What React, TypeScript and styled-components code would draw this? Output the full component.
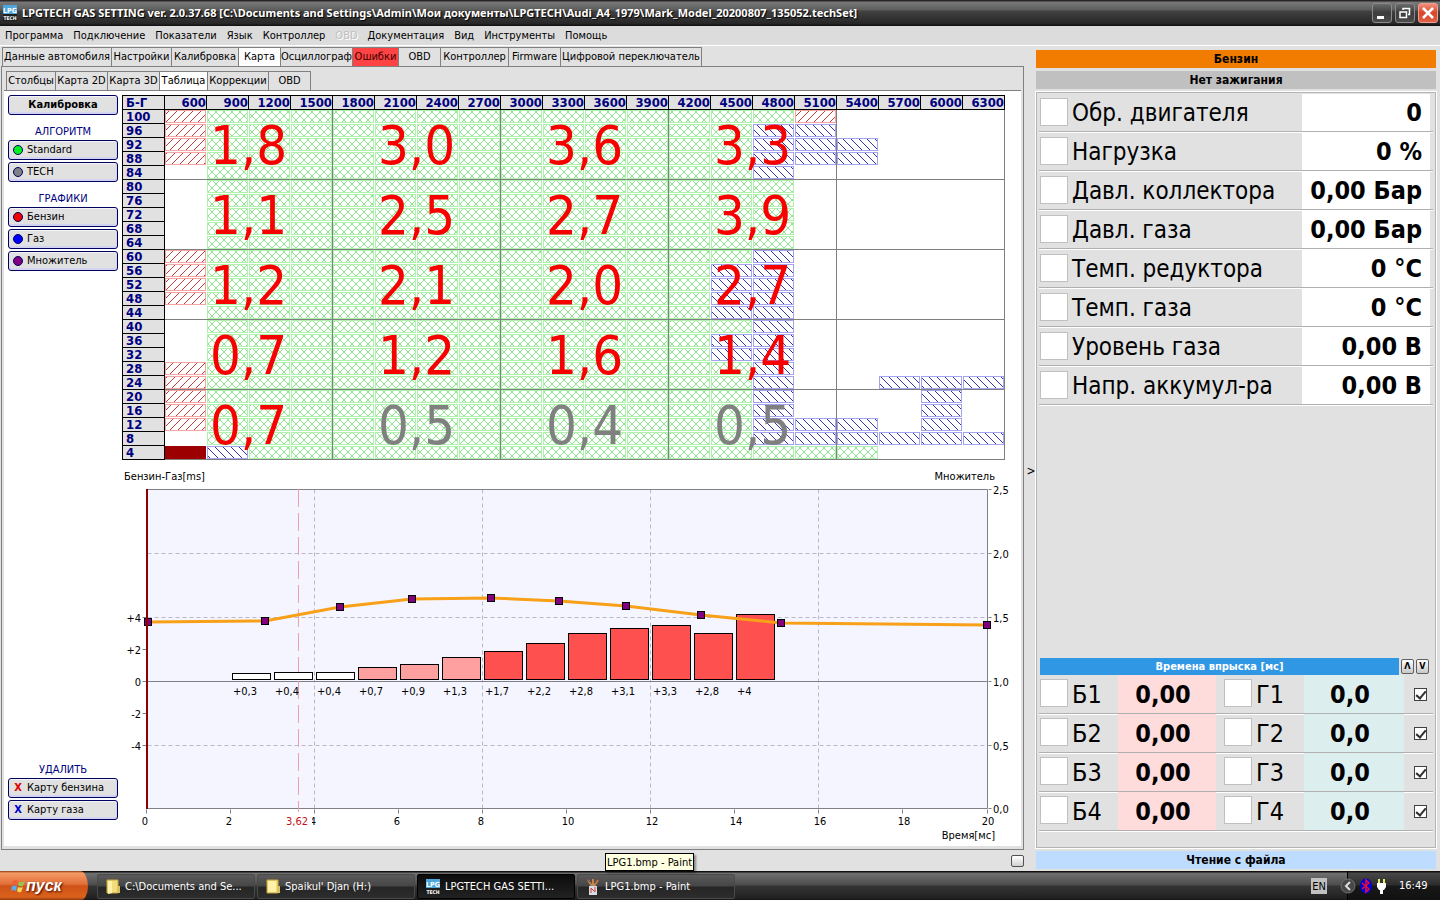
import React from "react";
import styled, { createGlobalStyle } from "styled-components";

const sans = `"DejaVu Sans Condensed", "DejaVu Sans", "Noto Sans", sans-serif`;

const GlobalStyle = createGlobalStyle`
  * { box-sizing: border-box; }
  html, body { margin: 0; padding: 0; }
  body { font-family: ${sans}; font-size: 11px; line-height: 14px; color: #000; background: #e1e1e1; }
  button, input { font: inherit; color: inherit; margin: 0; padding: 0; }
`;

const Page = styled.div`
  min-height: 100vh;
  display: flex;
  flex-direction: column;
  background: #e1e1e1;
`;

const TitleBar = styled.header`
  height: 26px;
  display: flex;
  align-items: center;
  gap: 5px;
  padding: 0 2px 0 3px;
  background: linear-gradient(#2a2526 0, #2a2526 1px, #787878 2px, #5c5c5c 10px, #424242 11px, #262626 24px, #141414 25px);
`;

const Title = styled.h1`
  flex: 1;
  margin: 0;
  font-family: "Noto Sans", sans-serif;
  font-size: 11px;
  line-height: 16px;
  font-weight: bold;
  color: #fff;
  text-shadow: 1px 1px 1px #000;
  white-space: nowrap;
`;

const WindowButtons = styled.div`
  display: flex;
  gap: 3px;
`;

const WindowButton = styled.button<{ $close?: boolean }>`
  width: 20px;
  height: 20px;
  display: flex;
  border: 1px solid ${(p) => (p.$close ? "#f0a090" : "#8a8a8a")};
  border-radius: 3px;
  background: ${(p) =>
    p.$close ? "linear-gradient(#f08f7c, #d8452a 50%, #e0604a)" : "linear-gradient(#6a6a6a, #3c3c3c 50%, #4c4c4c)"};
`;

const MenuBar = styled.nav`
  height: 20px;
  display: flex;
  align-items: center;
  gap: 10px;
  padding: 0 5px;
  background: #dcdcdc;
  border-bottom: 1px solid #fff;
`;

const MenuItem = styled.button`
  border: 0;
  background: none;
  white-space: nowrap;
  &:disabled { color: #c0c0c0; text-shadow: 1px 1px 0 #fff; }
`;

const Body = styled.main`
  flex: 1;
  display: flex;
`;

const LeftPane = styled.div`
  flex: 1;
  min-width: 0;
  display: flex;
  flex-direction: column;
  padding: 1px 0 0 1px;
`;

const TabRow = styled.div<{ $inset: number }>`
  display: flex;
  padding-left: ${(p) => p.$inset}px;
  height: 19px;
`;

const Tab = styled.button<{ $w: number; $active?: boolean; $alert?: boolean }>`
  width: ${(p) => p.$w}px;
  height: 19px;
  border: 1px solid #808080;
  border-width: 1px 1px 0 0;
  background: ${(p) => (p.$active ? "#fff" : p.$alert ? "#fd4343" : "#e1e1e1")};
  color: ${(p) => (p.$alert ? "#400" : "#000")};
  white-space: nowrap;
  overflow: visible;
  display: flex;
  justify-content: center;
  align-items: center;
  &:first-child { border-left-width: 1px; }
`;

const OuterPanel = styled.section`
  flex: 1;
  display: flex;
  flex-direction: column;
  border: 1px solid #808080;
  padding: 4px 2px 3px;
`;

const InnerPanel = styled.section`
  flex: 1;
  display: flex;
  gap: 4px;
  padding: 4px 0 0 4px;
  background: #fff;
  border-top: 1px solid #808080;
`;

const SideBar = styled.aside`
  width: 110px;
  display: flex;
  flex-direction: column;
  gap: 2px;
  padding-bottom: 26px;
`;

const SideTitle = styled.h2<{ $push?: boolean }>`
  margin: ${(p) => (p.$push ? "auto 0 0" : "8px 0 0")};
  font-size: 11px;
  line-height: 14px;
  height: 13px;
  font-weight: normal;
  text-align: center;
  color: #000080;
`;

const SideButton = styled.button<{ $main?: boolean }>`
  height: 20px;
  display: flex;
  align-items: center;
  justify-content: ${(p) => (p.$main ? "center" : "flex-start")};
  font-weight: ${(p) => (p.$main ? "bold" : "normal")};
  gap: 4px;
  padding: 0 4px;
  border: 1px solid #000060;
  border-radius: 3px;
  background: #e1e1e1;
  box-shadow: inset 0 1px 0 #f4f4f8, inset 0 -2px 0 #d4d4f2, inset -1px 0 0 #d4d4f2;
`;

const Dot = styled.span<{ $c: string }>`
  width: 10px;
  height: 10px;
  border-radius: 50%;
  border: 1px solid #000060;
  background: ${(p) => p.$c};
`;

const Cross = styled.span<{ $c: string }>`
  width: 10px;
  text-align: center;
  font-weight: bold;
  color: ${(p) => p.$c};
`;

const WorkArea = styled.div`
  flex: 1;
  min-width: 0;
  display: flex;
  flex-direction: column;
`;

const MapWrap = styled.div`
  position: relative;
  margin-right: 16px;
`;

const MapTable = styled.table`
  width: 100%;
  table-layout: fixed;
  border-collapse: separate;
  border-spacing: 0;
  border-left: 1px solid #000;
  color: #000080;
  font-size: 13px;
  line-height: 13px;
  th, td { padding: 0; height: 14px; }
`;

const Corner = styled.th`
  width: 42px;
  padding-left: 3px !important;
  text-align: left;
  background: #e1e1e1;
  border: solid #000;
  border-width: 1px 1px 1px 0;
`;

const ColHead = styled.th`
  text-align: right;
  background: #e1e1e1;
  border: solid #000;
  border-width: 1px 1px 1px 0;
`;

const RowHead = styled.th`
  text-align: left;
  padding-left: 3px !important;
  background: #e1e1e1;
  border: solid #000;
  border-width: 0 1px 1px 0;
`;

const slash = (c: string) => `linear-gradient(to bottom right, transparent 46%, ${c} 47%, ${c} 53%, transparent 54%)`;
const back = (c: string) => `linear-gradient(to bottom left, transparent 46%, ${c} 47%, ${c} 53%, transparent 54%)`;

const cellStyles: Record<string, string> = {
  r: `border: 1px solid #f5a3a3; background: ${slash("#c83c3c")} 0 0 / 8px 8px fixed;`,
  b: `border: 1px solid #a3a3ee; background: ${back("#3434ac")} 0 0 / 8px 8px fixed;`,
  g: `border: 1px solid #aef2ae; background: ${slash("#8ee68e")} 0 0 / 8px 8px fixed, ${back("#8ee68e")} 0 0 / 8px 8px fixed;`,
  d: `background: #9c0000;`,
};

const Cell = styled.div<{ $kind: string }>`
  height: 13px;
  margin: 0 1px 1px 0;
  ${(p) => cellStyles[p.$kind] ?? ""}
`;

const Blocks = styled.div`
  position: absolute;
  top: 15px;
  right: 0;
  bottom: 0;
  left: 43px;
  display: grid;
  grid-template: repeat(5, 1fr) / repeat(5, 1fr);
`;

const Block = styled.div<{ $muted?: boolean }>`
  display: flex;
  align-items: center;
  justify-content: center;
  padding-top: 2px;
  font-size: 54px;
  line-height: 60px;
  color: ${(p) => (p.$muted ? "#808080" : "#f80000")};
  border: solid rgba(0, 0, 0, 0.5);
  border-width: 0 1px 1px 0;
`;

const Chart = styled.svg`
  display: block;
  width: 100%;
  height: auto;
  font-family: ${sans};
  font-size: 11px;
`;

const StatusStrip = styled.footer`
  height: 21px;
  display: flex;
  justify-content: flex-end;
  align-items: center;
`;

const StatusButton = styled.button`
  width: 13px;
  height: 12px;
  border: 1px solid #505050;
  border-radius: 2px;
  background: linear-gradient(#fff, #d0d0d0);
`;

const Splitter = styled.button`
  width: 12px;
  border: 0;
  background: #e1e1e1;
  padding: 24px 0 0 2px;
  font-size: 12px;
`;

const RightPane = styled.aside`
  width: 404px;
  padding: 4px 4px 2px 0;
  display: flex;
  flex-direction: column;
  gap: 3px;
`;

const Banner = styled.div<{ $c: string }>`
  height: 18px;
  line-height: 18px;
  text-align: center;
  font-size: 12px;
  font-weight: bold;
  background: ${(p) => p.$c};
`;

const Gauges = styled.section`
  flex: 1;
  display: flex;
  flex-direction: column;
  border: 1px solid #b4b4b4;
  outline: 1px solid #fff;
  padding: 0 2px 16px;
`;

const GaugeRow = styled.div`
  height: 39px;
  display: flex;
  align-items: stretch;
  border-bottom: 1px solid #b0b0b0;
  box-shadow: 0 1px 0 #fff;
  font-size: 24px;
  line-height: 38px;
  padding: 1px 3px 0 1px;
`;

const Swatch = styled.button`
  width: 28px;
  height: 28px;
  margin-top: 4px;
  background: #fff;
  border: 1px solid #c0c0c0;
`;

const GaugeLabel = styled.span`
  flex: 1;
  padding-left: 4px;
  white-space: nowrap;
`;

const GaugeValue = styled.output`
  width: 128px;
  padding-right: 8px;
  text-align: right;
  font-weight: bold;
  font-size: 25px;
  background: #fff;
  white-space: nowrap;
`;

const TimesHead = styled.div`
  margin-top: auto;
  display: flex;
  align-items: center;
  gap: 2px;
  padding: 0 4px 0 1px;
`;

const TimesTitle = styled.h2`
  flex: 1;
  margin: 0;
  height: 17px;
  font-size: 11px;
  line-height: 18px;
  text-align: center;
  color: #fff;
  background: #2f97e4;
`;

const StepButton = styled.button`
  width: 13px;
  height: 15px;
  border: 1px solid #606060;
  border-radius: 2px;
  font-size: 9px;
  line-height: 9px;
  font-weight: bold;
  background: linear-gradient(#fff, #c8c8c8);
`;

const TimesRow = styled.div`
  height: 39px;
  display: flex;
  border-bottom: 1px solid #b0b0b0;
  box-shadow: 0 1px 0 #fff;
  font-size: 25px;
  line-height: 40px;
  padding-left: 1px;
`;

const TimesLabel = styled.span<{ $w: number }>`
  width: ${(p) => p.$w}px;
  padding-left: 4px;
`;

const TimesValue = styled.output<{ $c: string; $w: number }>`
  width: ${(p) => p.$w}px;
  padding-right: 8px;
  text-align: center;
  font-weight: bold;
  background: ${(p) => p.$c};
`;

const Gap = styled.span`
  width: 8px;
`;

const Tick = styled.input`
  appearance: none;
  width: 13px;
  height: 13px;
  margin: 13px 0 0 10px;
  border: 1px solid #404040;
  background: #fff;
  position: relative;
  &:checked::after {
    content: "";
    position: absolute;
    left: 3px;
    top: 0;
    width: 4px;
    height: 8px;
    border: solid #303030;
    border-width: 0 2px 2px 0;
    transform: rotate(40deg);
  }
`;

const TaskBar = styled.footer`
  height: 30px;
  display: flex;
  align-items: stretch;
  color: #fff;
  background: linear-gradient(#101010 0, #101010 1px, #707070 2px, #4c4c4c 14px, #343434 15px, #202020 28px, #000 30px);
`;

const Start = styled.button`
  width: 88px;
  display: flex;
  align-items: center;
  padding: 0 0 0 10px;
  border: 0;
  border-radius: 0 8px 8px 0 / 0 15px 15px 0;
  font: italic bold 16px/28px "Liberation Sans", sans-serif;
  color: #fff;
  text-shadow: 1px 1px 2px #401000;
  background: linear-gradient(#8a3a10 0, #f59a66 2px, #e2703a 13px, #cf5216 15px, #d9621c 26px, #7a2c08 30px);
`;

const Tasks = styled.div`
  flex: 1;
  display: flex;
  gap: 2px;
  padding: 3px 0 2px 9px;
`;

const Task = styled.button<{ $active?: boolean }>`
  position: relative;
  width: 158px;
  height: 25px;
  display: flex;
  align-items: center;
  gap: 5px;
  padding: 0 8px;
  border: 1px solid ${(p) => (p.$active ? "#000" : "#4a4a4a")};
  border-radius: 2px;
  color: #fff;
  white-space: nowrap;
  background: ${(p) =>
    p.$active ? "linear-gradient(#0c0c0c, #222)" : "linear-gradient(#5a5a5a, #464646 11px, #262626 12px, #2c2c2c)"};
`;

const Tip = styled.span`
  position: absolute;
  left: 27px;
  top: -22px;
  height: 18px;
  padding: 0 1px;
  line-height: 17px;
  color: #000;
  background: #ffffe1;
  border: 1px solid #000;
  box-shadow: 2px 2px 2px rgba(0, 0, 0, 0.4);
`;

const Lang = styled.span`
  align-self: center;
  width: 16px;
  height: 16px;
  line-height: 17px;
  text-align: center;
  color: #000;
  background: #c0c0c0;
  margin-right: 20px;
`;

const Tray = styled.div`
  width: 93px;
  display: flex;
  align-items: center;
  border-left: 1px solid #000;
  background: linear-gradient(#101010 0, #101010 1px, #484848 2px, #2c2c2c 14px, #181818 15px, #101010);
`;

const TrayIcons = styled.svg`
  flex: none;
  overflow: visible;
`;

const Clock = styled.time`
  margin-left: 11px;
`;

const LpgIcon = () => (
  <svg width="14" height="16" viewBox="0 0 14 16" aria-hidden="true">
    <rect width="14" height="9" fill="#4fa6dc" />
    <rect y="9" width="14" height="7" fill="#202020" />
    <text x="7" y="8" textAnchor="middle" fontSize="7" fontWeight="bold" fill="#fff">LPG</text>
    <text x="7" y="15" textAnchor="middle" fontSize="5" fontWeight="bold" fill="#fff">TECH</text>
  </svg>
);

const FolderIcon = ({ open }: { open?: boolean }) => (
  <svg width="14" height="16" viewBox="0 0 14 16" aria-hidden="true">
    <path d="M1 1h11v13H1z" fill="#f2dc7c" stroke="#c8a840" />
    <path d={open ? "M2 2h4v12l-4 1z" : "M2 2h8v11H2z"} fill="#fff2a8" />
    <path d="M12 7h2v7h-3z" fill="#d8c060" />
  </svg>
);

const PaintIcon = () => (
  <svg width="14" height="17" viewBox="0 0 14 17" aria-hidden="true">
    <path d="M6 8 2 2M7 8V1M8 8l4-6" stroke="#c08850" strokeWidth="2" />
    <path d="M1 1l3 3M12 1 9 5" stroke="#b04030" strokeWidth="1" />
    <rect x="3" y="8" width="8" height="9" fill="#d8dce8" />
    <path d="M5 15v-5l4 4v-5" stroke="#d04030" fill="none" />
  </svg>
);

const FlagIcon = () => (
  <svg width="16" height="16" viewBox="0 0 16 16" aria-hidden="true">
    <path d="M3 3q3-2 5 0L7 7Q5 6 2 7z" fill="#f06030" />
    <path d="M9 4q3 1 6-1l-2 5q-3 1-5-1z" fill="#90c850" />
    <path d="M2 8q3-1 5 0l-1 5q-3-2-5 0z" fill="#60a8f0" />
    <path d="M8 9q2 1 5 0l-2 5q-2 1-4-1z" fill="#f8d850" />
  </svg>
);

const menu = ["Программа", "Подключение", "Показатели", "Язык", "Контроллер", "OBD", "Документация", "Вид", "Инструменты", "Помощь"];

const mainTabs: [string, number][] = [
  ["Данные автомобиля", 110], ["Настройки", 60], ["Калибровка", 67], ["Карта", 42], ["Осциллограф", 72],
  ["Ошибки", 46], ["OBD", 42], ["Контроллер", 68], ["Firmware", 52], ["Цифровой переключатель", 141],
];

const subTabs: [string, number][] = [
  ["Столбцы", 50], ["Карта 2D", 52], ["Карта 3D", 52], ["Таблица", 48], ["Коррекции", 61], ["OBD", 42],
];

const rpm = Array.from({ length: 20 }, (_, i) => 600 + i * 300);
const g = (n: number) => "g".repeat(n);

const rows = [
  `r${g(14)}r....`,
  `r${g(13)}bb....`,
  `r${g(13)}bbb...`,
  `r${g(13)}bbb...`,
  `.${g(13)}b.....`,
  ...Array(5).fill(`.${g(14)}.....`),
  `r${g(13)}b.....`,
  ...Array(3).fill(`r${g(12)}bb.....`),
  `.${g(12)}bb.....`,
  `.${g(13)}b.....`,
  `.${g(12)}bb.....`,
  `.${g(12)}bb.....`,
  `r${g(13)}b.....`,
  `r${g(13)}b..bbb`,
  `r${g(13)}b...b.`,
  `r${g(13)}b...b.`,
  `r${g(13)}bbb.b.`,
  `.${g(13)}bbbbbb`,
  `db${g(15)}...`,
];

const blocks = [
  "1,8", "3,0", "3,6", "3,3", "",
  "1,1", "2,5", "2,7", "3,9", "",
  "1,2", "2,1", "2,0", "2,7", "",
  "0,7", "1,2", "1,6", "1,4", "",
  "0,7", "0,5", "0,4", "0,5", "",
];

const bars: [number, string, string][] = [
  [673, "+0,3", "#fff"], [672, "+0,4", "#fff"], [672, "+0,4", "#fff"], [667, "+0,7", "#ffa0a0"],
  [664, "+0,9", "#ffa0a0"], [657, "+1,3", "#ffa0a0"], [651, "+1,7", "#ff5050"], [643, "+2,2", "#ff5050"],
  [633, "+2,8", "#ff5050"], [628, "+3,1", "#ff5050"], [625, "+3,3", "#ff5050"], [633, "+2,8", "#ff5050"],
  [614, "+4", "#ff5050"],
];

const curve = [[148, 622], [265, 621], [340, 607], [412, 599], [491, 598], [559, 601], [626, 606], [701, 615], [781, 623], [987, 625]];

const gauges = [
  ["Обр. двигателя", "0"], ["Нагрузка", "0 %"], ["Давл. коллектора", "0,00 Бар"], ["Давл. газа", "0,00 Бар"],
  ["Темп. редуктора", "0 °C"], ["Темп. газа", "0 °C"], ["Уровень газа", "0,00 В"], ["Напр. аккумул-ра", "0,00 В"],
];

const InjectionChart = () => (
  <Chart viewBox="122 460 899 386" role="img" aria-label="Бензин-Газ, множитель">
    <text x="124" y="480">Бензин-Газ[ms]</text>
    <text x="995" y="480" textAnchor="end">Множитель</text>
    <rect x="147" y="489" width="841" height="320" fill="#f5f5ff" />
    <g transform="translate(0.5 0.5)" fill="none" stroke="#b8b8c8" strokeDasharray="4 3">
      {[314, 482, 650, 818].map((x) => <path key={x} d={`M${x} 489V808`} />)}
      {[553, 617, 745].map((y) => <path key={y} d={`M147 ${y}H987`} />)}
    </g>
    <g transform="translate(0.5 0.5)" fill="none" stroke="#808088">
      <path d="M147 489H987V808H147M147 681H987" />
      {[146, 230, 314, 398, 482, 566, 650, 734, 818, 902, 987].map((x) => <path key={x} d={`M${x} 809v4`} />)}
      {[489, 553, 617, 681, 745, 808].map((y) => <path key={y} d={`M988 ${y}h3`} />)}
      {[617, 649, 681, 713, 745].map((y) => <path key={y} d={`M142 ${y}h4`} />)}
    </g>
    <path d="M298.5 489V812" stroke="#f0a0a8" strokeDasharray="18 6" />
    <g transform="translate(0.5 0.5)" stroke="#000">
      {bars.map(([y, , c], i) => <rect key={i} x={232 + i * 42} y={y} width="38" height={679 - y} fill={c} />)}
    </g>
    {bars.map(([, t], i) => <text key={i} x={233 + i * 42} y="695">{t}</text>)}
    <polyline points={curve.map((p) => p.join()).join(" ")} fill="none" stroke="#f8a018" strokeWidth="3" />
    {curve.slice(1).map(([x, y]) => (
      <rect key={x} x={x - 3.5} y={y - 3.5} width="7" height="7" fill="#800080" stroke="#000" />
    ))}
    <rect x="144.5" y="618.5" width="7" height="7" fill="#800080" stroke="#000" />
    <path d="M147 489V809" stroke="#900000" strokeWidth="2" />
    {["+4", "+2", "0", "-2", "-4"].map((t, i) => <text key={t} x="141" y={622 + i * 32} textAnchor="end">{t}</text>)}
    {["2,5", "2,0", "1,5", "1,0", "0,5", "0,0"].map((t, i) => <text key={t} x="993" y={494 + i * 64 - (i === 5 ? 1 : 0)}>{t}</text>)}
    {Array.from({ length: 11 }, (_, i) => (
      <text key={i} x={(i > 4 ? 148 : 145) + i * 84} y="825" textAnchor="middle">{i * 2}</text>
    ))}
    <rect x="286" y="814" width="26" height="14" fill="#fff" />
    <text x="286" y="825" fill="#c81020">3,62</text>
    <text x="995" y="839" textAnchor="end">Время[мс]</text>
  </Chart>
);

export default function App() {
  return (
    <Page>
      <GlobalStyle />
      <TitleBar>
        <LpgIcon />
        <Title>LPGTECH GAS SETTING ver. 2.0.37.68 [C:\Documents and Settings\Admin\Мои документы\LPGTECH\Audi_A4_1979\Mark_Model_20200807_135052.techSet]</Title>
        <WindowButtons>
          <WindowButton aria-label="Свернуть">
            <svg width="18" height="18"><path d="M4 12h7v3H4z" fill="#fff" /></svg>
          </WindowButton>
          <WindowButton aria-label="Развернуть">
            <svg width="18" height="18" fill="none" stroke="#fff">
              <path d="M7 6V4.500h6.500v6H12" strokeWidth="1.500" /><path d="M4 8h6.500v5.500H4z" strokeWidth="1.500" />
            </svg>
          </WindowButton>
          <WindowButton $close aria-label="Закрыть">
            <svg width="18" height="18"><path d="M4 4l10 10M14 4 4 14" stroke="#fff" strokeWidth="2.500" /></svg>
          </WindowButton>
        </WindowButtons>
      </TitleBar>
      <MenuBar>
        {menu.map((m) => <MenuItem key={m} disabled={m === "OBD"}>{m}</MenuItem>)}
      </MenuBar>
      <Body>
        <LeftPane>
          <TabRow $inset={1}>
            {mainTabs.map(([t, w]) => <Tab key={t} $w={w} $active={t === "Карта"} $alert={t === "Ошибки"}>{t}</Tab>)}
          </TabRow>
          <OuterPanel>
            <TabRow $inset={2}>
              {subTabs.map(([t, w]) => <Tab key={t} $w={w} $active={t === "Таблица"}>{t}</Tab>)}
            </TabRow>
            <InnerPanel>
              <SideBar>
                <SideButton $main>Калибровка</SideButton>
                <SideTitle>АЛГОРИТМ</SideTitle>
                <SideButton><Dot $c="#00f020" />Standard</SideButton>
                <SideButton><Dot $c="#808088" />TECH</SideButton>
                <SideTitle>ГРАФИКИ</SideTitle>
                <SideButton><Dot $c="#f00000" />Бензин</SideButton>
                <SideButton><Dot $c="#0000ff" />Газ</SideButton>
                <SideButton><Dot $c="#800080" />Множитель</SideButton>
                <SideTitle $push>УДАЛИТЬ</SideTitle>
                <SideButton><Cross $c="#e00000">X</Cross>Карту бензина</SideButton>
                <SideButton><Cross $c="#0000d0">X</Cross>Карту газа</SideButton>
              </SideBar>
              <WorkArea>
                <MapWrap>
                  <MapTable>
                    <thead>
                      <tr><Corner>Б-Г</Corner>{rpm.map((r) => <ColHead key={r}>{r}</ColHead>)}</tr>
                    </thead>
                    <tbody>
                      {rows.map((r, i) => (
                        <tr key={i}>
                          <RowHead>{100 - i * 4}</RowHead>
                          {r.split("").map((k: string, j: number) => <td key={j}><Cell $kind={k} /></td>)}
                        </tr>
                      ))}
                    </tbody>
                  </MapTable>
                  <Blocks>
                    {blocks.map((v, i) => <Block key={i} $muted={i > 20}>{v}</Block>)}
                  </Blocks>
                </MapWrap>
                <InjectionChart />
              </WorkArea>
            </InnerPanel>
          </OuterPanel>
          <StatusStrip><StatusButton aria-label="Панель" /></StatusStrip>
        </LeftPane>
        <Splitter>&gt;</Splitter>
        <RightPane>
          <Banner $c="#f27c00">Бензин</Banner>
          <Banner $c="#c0c0c0">Нет зажигания</Banner>
          <Gauges>
            {gauges.map(([l, v]) => (
              <GaugeRow key={l}>
                <Swatch aria-label={l} /><GaugeLabel>{l}</GaugeLabel><GaugeValue>{v}</GaugeValue>
              </GaugeRow>
            ))}
            <TimesHead>
              <TimesTitle>Времена впрыска [мс]</TimesTitle>
              <StepButton>Λ</StepButton><StepButton>V</StepButton>
            </TimesHead>
            {[1, 2, 3, 4].map((n) => (
              <TimesRow key={n}>
                <Swatch aria-label={`Б${n}`} /><TimesLabel $w={50}>Б{n}</TimesLabel>
                <TimesValue $c="#ffdcdc" $w={98}>0,00</TimesValue><Gap />
                <Swatch aria-label={`Г${n}`} /><TimesLabel $w={52}>Г{n}</TimesLabel>
                <TimesValue $c="#dceeee" $w={100}>0,0</TimesValue>
                <Tick type="checkbox" defaultChecked aria-label={`Цилиндр ${n}`} />
              </TimesRow>
            ))}
          </Gauges>
          <Banner $c="#bedcff">Чтение с файла</Banner>
        </RightPane>
      </Body>
      <TaskBar>
        <Start><FlagIcon />пуск</Start>
        <Tasks>
          <Task><FolderIcon open />C:\Documents and Se...</Task>
          <Task><FolderIcon />Spaikul' Djan (H:)</Task>
          <Task $active><LpgIcon />LPGTECH GAS SETTI...</Task>
          <Task><PaintIcon />LPG1.bmp - Paint<Tip role="tooltip">LPG1.bmp - Paint</Tip></Task>
        </Tasks>
        <Lang>EN</Lang>
        <Tray>
          <TrayIcons width="40" height="20" viewBox="0 0 40 20" aria-hidden="true">
            <circle cx="0" cy="10" r="7" fill="#484848" stroke="#707070" />
            <path d="M2 6l-4 4 4 4" fill="none" stroke="#ddd" strokeWidth="2" />
            <ellipse cx="18" cy="10" rx="6" ry="7.500" fill="#0000d8" />
            <path d="M14 7l7 6-3 3V4l3 3-7 6" fill="none" stroke="#e81030" strokeWidth="1.500" />
            <path d="M31 3v5M36 3v5" stroke="#e8f070" strokeWidth="2" />
            <path d="M29 7h9v4l-2 3h-1v4h-3v-4h-1l-2-3z" fill="#fff" />
          </TrayIcons>
          <Clock>16:49</Clock>
        </Tray>
      </TaskBar>
    </Page>
  );
}
